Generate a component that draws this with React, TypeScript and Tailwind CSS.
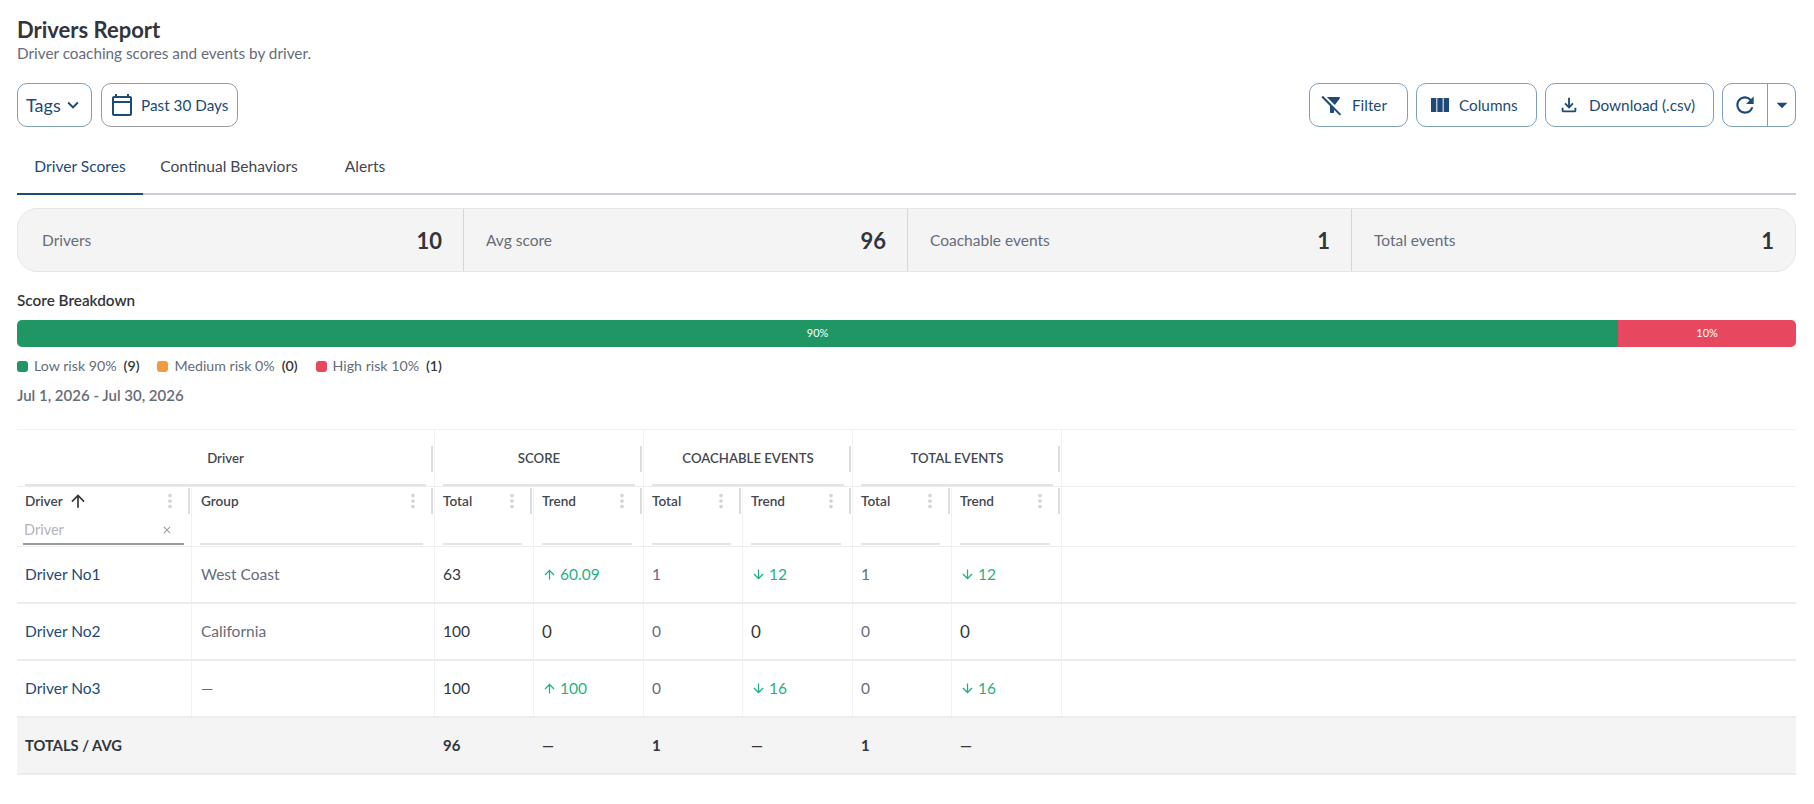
import { MdArrowDropDown, MdArrowDownward, MdArrowUpward, MdClose, MdOutlineFileDownload, MdFilterAltOff, MdKeyboardArrowDown, MdMoreVert, MdOutlineCalendarToday, MdRefresh, MdViewColumn } from 'react-icons/md';
import type { ReactNode } from 'react';

const gridCols = 'grid grid-cols-[175px_243px_99px_110px_99px_110px_99px_110px_1fr]';

const stats = [
  { label: 'Drivers', value: '10' },
  { label: 'Avg score', value: '96' },
  { label: 'Coachable events', value: '1' },
  { label: 'Total events', value: '1' },
];

const subCols = ['Total', 'Trend', 'Total', 'Trend', 'Total', 'Trend'];

function OutlineButton({ children, className = '' }: { children: ReactNode; className?: string }) {
  return (
    <button className={`h-[44px] flex items-center rounded-[10px] border border-[#7f9fbc] text-[#1d4a77] text-[15.3px] ${className}`}>
      {children}
    </button>
  );
}

function Trend({ dir, value }: { dir: 'up' | 'down'; value: string }) {
  return (
    <span className="flex items-center gap-[3px] text-[#1fb183]">
      {dir === 'up' ? <MdArrowUpward size={15} /> : <MdArrowDownward size={15} />}
      {value}
    </span>
  );
}

function Cell({ children, className = '' }: { children?: ReactNode; className?: string }) {
  return <div className={`flex items-center px-2 border-r border-[#f1f1f2] text-[15.5px] ${className}`}>{children}</div>;
}

function Row({ name, group, score, trend, coach, coachTrend, total, totalTrend }: {
  name: string;
  group: string;
  score: string;
  trend: ReactNode;
  coach: string;
  coachTrend: ReactNode;
  total: string;
  totalTrend: ReactNode;
}) {
  return (
    <div className={`${gridCols} h-[57px] border-b-2 border-[#ececed]`}>
      <Cell className="text-[#1d4a77]">{name}</Cell>
      <Cell className="pl-[9px] text-[#666c78]">{group}</Cell>
      <Cell className="text-[#33353b]">{score}</Cell>
      <Cell className="text-[#33353b]">{trend}</Cell>
      <Cell className="text-[#666c78]">{coach}</Cell>
      <Cell className="text-[#33353b]">{coachTrend}</Cell>
      <Cell className="text-[#666c78]">{total}</Cell>
      <Cell className="text-[#33353b]">{totalTrend}</Cell>
      <div />
    </div>
  );
}

function HeadCell({ label, sorted, input, className = '' }: { label: string; sorted?: boolean; input?: boolean; className?: string }) {
  return (
    <div className={`relative h-[59px] pl-2 pr-[15px] border-r border-[#f1f1f2] ${className}`}>
      <div className="h-[28px] flex items-center justify-between text-[13.6px] font-semibold text-[#43474f]">
        <span className="flex items-center gap-[5px]">
          {label}
          {sorted && <MdArrowUpward size={20} className="text-[#33353b]" />}
        </span>
        <MdMoreVert size={22} className="text-[#d3d4d6] -mr-[5px]" />
      </div>
      <div className={`absolute bottom-[1px] h-[27px] flex items-center justify-between pb-[1px] pl-[1px] pr-[11px] border-b-2 ${input ? 'left-[6px] right-[7px] border-[#9a9a9c]' : 'left-[8px] right-[11px] border-[#e4e4e6]'}`}>
        {input && (
          <>
            <span className="text-[14.5px] text-[#b4b5b8]">Driver</span>
            <MdClose size={12} className="text-[#9c9da1]" />
          </>
        )}
      </div>
      <span className="absolute right-[1px] top-[1px] h-[26px] w-[2px] bg-[#dcdcde]" />
    </div>
  );
}

function GroupHead({ label, className }: { label: string; className: string }) {
  return (
    <div className={`relative flex items-center justify-center pt-[1px] text-[13.2px] font-semibold text-[#43474f] border-r border-[#f1f1f2] ${className}`}>
      <div className="absolute left-2 right-2 bottom-0 border-b-2 border-[#e4e4e6]" />
      {label}
      <span className="absolute right-[1px] top-[16px] h-[26px] w-[2px] bg-[#dcdcde]" />
    </div>
  );
}

export default function App() {
  return (
    <div className="min-h-[804px] bg-white pl-[17px] pr-[18px] pt-[16px] font-['Lato',sans-serif] text-[#33353b]">
      <h1 className="text-[22px] leading-[28px] font-bold text-[#33353b]">Drivers Report</h1>
      <p className="text-[15.3px] leading-[18px] text-[#666c78]">Driver coaching scores and events by driver.</p>

      <div className="mt-[21px] flex justify-between">
        <div className="flex gap-[9px]">
          <OutlineButton className="w-[75px] pl-[8px] text-[18px] gap-[1px]">
            Tags
            <MdKeyboardArrowDown size={22} />
          </OutlineButton>
          <OutlineButton className="w-[137px] border-[#9a9a9c] pl-[8px] gap-[7px]">
            <MdOutlineCalendarToday size={24} />
            Past 30 Days
          </OutlineButton>
        </div>
        <div className="flex gap-[8px]">
          <OutlineButton className="w-[99px] pl-[10px] gap-[8px]">
            <MdFilterAltOff size={24} />
            Filter
          </OutlineButton>
          <OutlineButton className="w-[121px] pl-[11px] gap-[7px]">
            <MdViewColumn size={24} />
            Columns
          </OutlineButton>
          <OutlineButton className="w-[169px] pl-[12px] gap-[9px]">
            <MdOutlineFileDownload size={22} />
            Download (.csv)
          </OutlineButton>
          <OutlineButton className="w-[74px]">
            <span className="w-[44px] flex justify-center"><MdRefresh size={26} /></span>
            <span className="h-full flex-1 flex items-center justify-center border-l border-[#7f9fbc]"><MdArrowDropDown size={26} /></span>
          </OutlineButton>
        </div>
      </div>

      <div className="mt-[13px] flex h-[55px] border-b-2 border-[#c9ced6] text-[15.6px]">
        <div className="w-[126px] -mb-[2px] flex items-center justify-center border-b-2 border-[#1d4a77] text-[#1d4a77]">Driver Scores</div>
        <div className="w-[172px] flex items-center justify-center text-[#43474f]">Continual Behaviors</div>
        <div className="w-[100px] flex items-center justify-center text-[#43474f]">Alerts</div>
      </div>

      <div className="mt-[13px] grid grid-cols-[446px_444px_444px_1fr] h-[64px] rounded-[20px] border border-[#e3e6ea] bg-[#f4f4f5]">
        {stats.map((s, i) => (
          <div key={s.label} className={`flex items-center justify-between pt-[1px] ${i === 0 ? 'pl-[24px]' : 'pl-[22px]'} pr-[21px] ${i < 3 ? 'border-r border-[#c6dbf0]' : ''}`}>
            <span className="text-[15.5px] text-[#666c78]">{s.label}</span>
            <span className="text-[22px] font-bold text-[#33353b]">{s.value}</span>
          </div>
        ))}
      </div>

      <div className="mt-[18px] text-[15.3px] leading-[20px] font-semibold text-[#33353b]">Score Breakdown</div>
      <div className="mt-[10px] flex h-[27px] rounded-[5px] overflow-hidden text-[11px] text-white">
        <div className="w-[90%] bg-[#1f9663] flex items-center justify-center">90%</div>
        <div className="w-[10%] bg-[#e8485f] flex items-center justify-center">10%</div>
      </div>
      <div className="mt-[9px] flex items-center h-[20px] text-[14.2px] text-[#666c78]">
        <span className="w-[11px] h-[11px] rounded-[3px] bg-[#1f9663] mr-[6px]" />
        Low risk 90%<span className="ml-[7px] font-semibold text-[#33353b]">(9)</span>
        <span className="w-[11px] h-[11px] rounded-[3px] bg-[#f29a3f] ml-[17px] mr-[7px]" />
        Medium risk 0%<span className="ml-[7px] font-semibold text-[#33353b]">(0)</span>
        <span className="w-[11px] h-[11px] rounded-[3px] bg-[#e8485f] ml-[18px] mr-[6px]" />
        High risk 10%<span className="ml-[7px] font-semibold text-[#33353b]">(1)</span>
      </div>
      <div className="mt-[9px] text-[15px] leading-[20px] font-semibold text-[#666c78]">Jul 1, 2026 - Jul 30, 2026</div>

      <div className="mt-[24px] border-t border-[#f1f1f2]">
        <div className={`${gridCols} h-[56px]`}>
          <GroupHead label="Driver" className="col-span-2" />
          <GroupHead label="SCORE" className="col-span-2" />
          <GroupHead label="COACHABLE EVENTS" className="col-span-2" />
          <GroupHead label="TOTAL EVENTS" className="col-span-2" />
          <div />
        </div>
        <div className={`${gridCols} border-t border-b border-[#ececed]`}>
          <HeadCell label="Driver" sorted input />
          <HeadCell label="Group" className="pl-[9px]" />
          {subCols.map((c, i) => <HeadCell key={i} label={c} />)}
          <div />
        </div>
        <Row name="Driver No1" group="West Coast" score="63" trend={<Trend dir="up" value="60.09" />} coach="1" coachTrend={<Trend dir="down" value="12" />} total="1" totalTrend={<Trend dir="down" value="12" />} />
        <Row name="Driver No2" group="California" score="100" trend={<span className="text-[17px]">0</span>} coach="0" coachTrend={<span className="text-[17px]">0</span>} total="0" totalTrend={<span className="text-[17px]">0</span>} />
        <Row name="Driver No3" group="—" score="100" trend={<Trend dir="up" value="100" />} coach="0" coachTrend={<Trend dir="down" value="16" />} total="0" totalTrend={<Trend dir="down" value="16" />} />
        <div className={`${gridCols} h-[57px] bg-[#f4f4f5] border-b-2 border-[#ececed] font-bold text-[#33353b]`}>
          <div className="col-span-2 flex items-center px-2 text-[14.7px]">TOTALS / AVG</div>
          {['96', '—', '1', '—', '1', '—'].map((v, i) => (
            <div key={i} className="flex items-center px-2 text-[15px]">{v}</div>
          ))}
          <div />
        </div>
      </div>
    </div>
  );
}
